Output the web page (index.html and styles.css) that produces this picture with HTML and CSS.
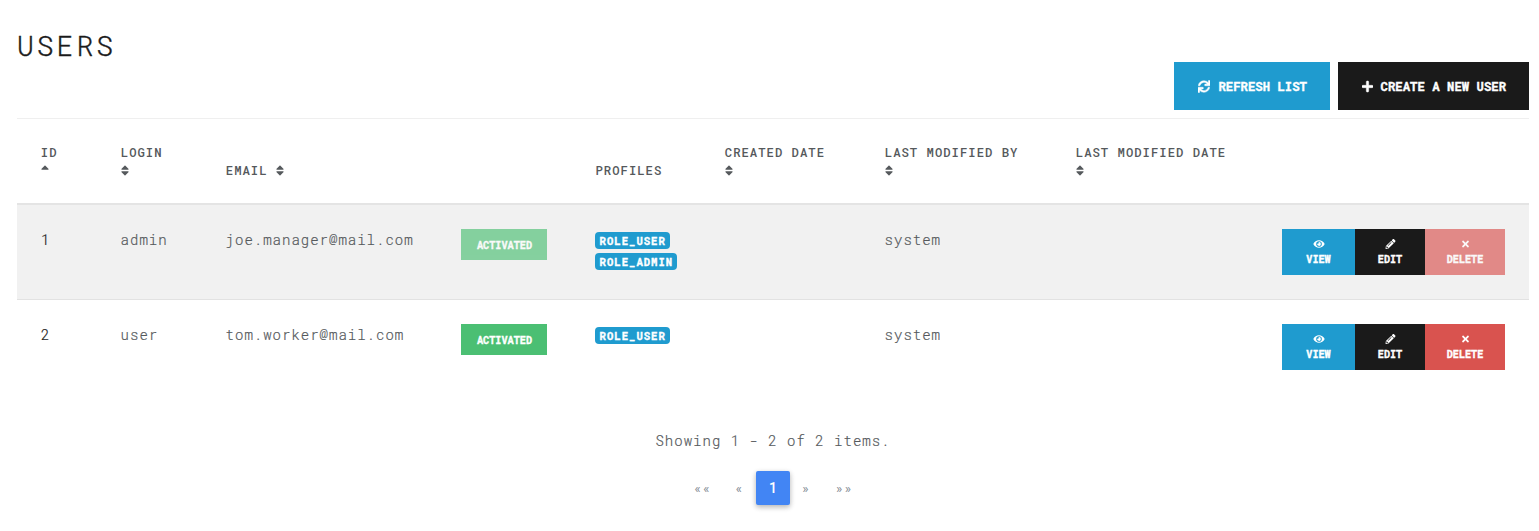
FILE: index.html
```html
<!DOCTYPE html>
<html lang="en">
<head>
<meta charset="utf-8">
<title>Users</title>
<link rel="stylesheet" href="styles.css">
</head>
<body>
<svg class="defs" width="0" height="0" aria-hidden="true">
<symbol id="sort" viewBox="0 0 320 512"><path d="M41 288h238c21.400 0 32.100 25.900 17 41L177 448c-9.400 9.400-24.600 9.400-33.900 0L24 329c-15.100-15.100-4.400-41 17-41zm255-105L177 64c-9.400-9.400-24.600-9.400-33.900 0L24 183c-15.100 15.100-4.400 41 17 41h238c21.400 0 32.100-25.900 17-41z"/></symbol>
<symbol id="sort-up" viewBox="0 0 320 512"><path d="M279 224H41c-21.400 0-32.100-25.900-17-41L143 64c9.400-9.400 24.600-9.400 33.900 0l119 119c15.200 15.100 4.500 41-16.900 41z"/></symbol>
<symbol id="sync" viewBox="0 0 512 512"><path d="M440.650 12.570l4 82.770A247.160 247.160 0 0 0 255.830 8C134.730 8 33.910 94.920 12.290 209.820A12 12 0 0 0 24.090 224h49.050a12 12 0 0 0 11.670-9.260 175.910 175.910 0 0 1 317-56.940l-101.460-4.860a12 12 0 0 0-12.570 12v47.410a12 12 0 0 0 12 12H500a12 12 0 0 0 12-12V12a12 12 0 0 0-12-12h-47.370a12 12 0 0 0-11.980 12.570zM255.830 432a175.610 175.610 0 0 1-146-77.800l101.800 4.870a12 12 0 0 0 12.570-12v-47.400a12 12 0 0 0-12-12H12a12 12 0 0 0-12 12V500a12 12 0 0 0 12 12h47.350a12 12 0 0 0 12-12.600l-4.150-82.570A247.170 247.170 0 0 0 255.830 504c121.110 0 221.930-86.920 243.550-201.820a12 12 0 0 0-11.800-14.180h-49.050a12 12 0 0 0-11.670 9.260A175.860 175.860 0 0 1 255.830 432z"/></symbol>
<symbol id="plus" viewBox="0 0 448 512"><path d="M416 208H272V64c0-17.670-14.330-32-32-32h-32c-17.670 0-32 14.330-32 32v144H32c-17.670 0-32 14.330-32 32v32c0 17.670 14.330 32 32 32h144v144c0 17.670 14.330 32 32 32h32c17.670 0 32-14.330 32-32V304h144c17.670 0 32-14.330 32-32v-32c0-17.670-14.330-32-32-32z"/></symbol>
<symbol id="eye" viewBox="0 0 576 512"><path d="M572.520 241.400C518.290 135.590 410.930 64 288 64S57.680 135.640 3.480 241.410a32.350 32.350 0 0 0 0 29.190C57.710 376.410 165.070 448 288 448s230.320-71.640 284.520-177.410a32.350 32.350 0 0 0 0-29.190zM288 400a144 144 0 1 1 144-144 143.930 143.930 0 0 1-144 144zm0-240a95.310 95.310 0 0 0-25.310 3.790 47.850 47.850 0 0 1-66.900 66.900A95.780 95.780 0 1 0 288 160z"/></symbol>
<symbol id="pencil" viewBox="0 0 512 512"><path d="M497.900 142.100l-46.100 46.100c-4.700 4.700-12.300 4.700-17 0l-111-111c-4.700-4.700-4.700-12.300 0-17l46.100-46.100c18.700-18.700 49.100-18.700 67.900 0l60.100 60.100c18.800 18.700 18.800 49.100 0 67.900zM284.200 99.800L21.600 362.400.400 483.900c-2.900 16.400 11.400 30.600 27.800 27.800l121.500-21.300 262.600-262.600c4.700-4.700 4.700-12.300 0-17l-111-111c-4.800-4.700-12.400-4.700-17.100 0zM124.100 339.900c-5.500-5.500-5.500-14.300 0-19.800l154-154c5.500-5.500 14.300-5.500 19.800 0s5.500 14.300 0 19.800l-154 154c-5.500 5.500-14.300 5.500-19.800 0zM88 424h48v36.300l-64.500 11.300-31.100-31.100L51.700 376H88v48z"/></symbol>
<symbol id="times" viewBox="0 0 352 512"><path d="M242.720 256l100.070-100.070c12.280-12.280 12.280-32.190 0-44.480l-22.240-22.240c-12.280-12.280-32.190-12.280-44.480 0L176 189.280 75.930 89.210c-12.280-12.280-32.190-12.280-44.480 0L9.210 111.450c-12.280 12.280-12.280 32.190 0 44.480L109.280 256 9.210 356.070c-12.280 12.280-12.280 32.190 0 44.480l22.240 22.240c12.280 12.280 32.200 12.280 44.480 0L176 322.720l100.070 100.070c12.280 12.280 32.200 12.280 44.480 0l22.240-22.240c12.280-12.280 12.280-32.190 0-44.480L242.720 256z"/></symbol>
</svg>
<main class="page">
  <header class="heading">
    <h2>USERS</h2>
    <div class="toolbar">
      <button class="btn info"><svg class="i-sync"><use href="#sync"/></svg><span>REFRESH LIST</span></button>
      <button class="btn dark"><svg class="i-plus"><use href="#plus"/></svg><span>CREATE A NEW USER</span></button>
    </div>
  </header>
  <table class="users">
    <colgroup><col class="c-id"><col class="c-login"><col class="c-email"><col class="c-state"><col class="c-prof"><col class="c-created"><col class="c-by"><col class="c-date"><col class="c-act"></colgroup>
    <thead><tr>
      <th>ID<br><svg class="sort"><use href="#sort-up"/></svg></th>
      <th>LOGIN<br><svg class="sort"><use href="#sort"/></svg></th>
      <th>EMAIL <svg class="sort"><use href="#sort"/></svg></th>
      <th></th>
      <th class="profiles">PROFILES</th>
      <th>CREATED DATE<br><svg class="sort"><use href="#sort"/></svg></th>
      <th>LAST MODIFIED BY<br><svg class="sort"><use href="#sort"/></svg></th>
      <th>LAST MODIFIED DATE<br><svg class="sort"><use href="#sort"/></svg></th>
      <th></th>
    </tr></thead>
    <tbody>
      <tr class="odd">
        <td class="id">1</td><td>admin</td><td>joe.manager@mail.com</td>
        <td><button class="state disabled">ACTIVATED</button></td>
        <td><div class="roles"><span class="badge">ROLE_USER</span><span class="badge">ROLE_ADMIN</span></div></td>
        <td></td><td>system</td><td></td>
        <td><div class="actions">
          <button class="act view"><svg class="i-eye"><use href="#eye"/></svg><span>VIEW</span></button>
          <button class="act edit"><svg class="i-sm"><use href="#pencil"/></svg><span>EDIT</span></button>
          <button class="act delete disabled"><svg class="i-sm"><use href="#times"/></svg><span>DELETE</span></button>
        </div></td>
      </tr>
      <tr>
        <td class="id">2</td><td>user</td><td>tom.worker@mail.com</td>
        <td><button class="state">ACTIVATED</button></td>
        <td><div class="roles"><span class="badge">ROLE_USER</span></div></td>
        <td></td><td>system</td><td></td>
        <td><div class="actions">
          <button class="act view"><svg class="i-eye"><use href="#eye"/></svg><span>VIEW</span></button>
          <button class="act edit"><svg class="i-sm"><use href="#pencil"/></svg><span>EDIT</span></button>
          <button class="act delete"><svg class="i-sm"><use href="#times"/></svg><span>DELETE</span></button>
        </div></td>
      </tr>
    </tbody>
  </table>
  <p class="summary">Showing 1 - 2 of 2 items.</p>
  <nav class="pager">
    <a class="wide">««</a><a>«</a><a class="current">1</a><a class="next">»</a><a class="wide">»»</a>
  </nav>
</main>
</body>
</html>
```

FILE: styles.css
```css
* { box-sizing: border-box; }
body {
  margin: 0;
  background: #fff;
  color: #55595c;
  font: 300 14px/21px "Roboto Mono", "Liberation Mono", monospace;
  letter-spacing: 1px;
}
.defs { position: absolute; }
svg { fill: currentColor; }
.page { width: 1512px; margin-left: 17px; }
.heading { height: 118px; padding-top: 29px; }
h2 {
  margin: 0;
  height: 33px;
  color: #1a1a1a;
  font-size: 28px;
  font-weight: 300;
  line-height: 34px;
  letter-spacing: 3px;
  -webkit-text-stroke: 0.4px #1a1a1a;
}
.toolbar { display: flex; justify-content: flex-end; gap: 8px; }
button {
  border: 0;
  padding: 0;
  color: #fff;
  font-family: inherit;
  font-weight: 700;
}
.btn {
  display: flex;
  align-items: center;
  height: 48px;
  padding: 0 24px;
  font-size: 12.25px;
  letter-spacing: 0.03px;
  white-space: nowrap;
  -webkit-text-stroke: 0.35px #fff;
}
.btn svg { stroke: #fff; stroke-width: 20px; overflow: visible; }
.info { width: 156px; background: #1f9bcf; }
.dark { width: 191px; background: #1a1a1a; }
.i-sync { width: 12px; height: 13px; margin-right: 8.4px; }
.i-plus { width: 11px; height: 13px; margin-right: 7.6px; }

.users {
  width: 1512px;
  table-layout: fixed;
  border-collapse: separate;
  border-spacing: 0;
}
.c-id { width: 80px; }
.c-login { width: 105px; }
.c-email { width: 235px; }
.c-state { width: 134px; }
.c-prof { width: 130px; }
.c-created { width: 160px; }
.c-by { width: 191px; }
.c-date { width: 206px; }
.c-act { width: 271px; }
th {
  height: 87px;
  padding: 0 0 24px 23.8px;
  border-top: 1px solid #efefef;
  border-bottom: 2px solid #e4e4e4;
  vertical-align: bottom;
  text-align: left;
  font-size: 12.25px;
  font-weight: 500;
  line-height: 18px;
  letter-spacing: 1px;
  white-space: nowrap;
}
th.profiles { padding-left: 24.5px; }
.sort { width: 8px; height: 13px; margin-left: -0.3px; vertical-align: -2px; }
td { height: 94px; padding: 24px 0 0 24px; vertical-align: top; white-space: nowrap; }
td:nth-child(2), td:nth-child(3), td:nth-child(7) { padding-left: 23.6px; }
td:not(:has(button, .badge)), .summary { -webkit-text-stroke: 0.2px currentColor; }
.odd td { height: 95px; background: #f1f1f1; border-bottom: 1px solid #e2e2e2; }
td.id { color: #1a1a1a; }
.state {
  display: block;
  width: 86px;
  height: 31px;
  padding-left: 1px;
  background: #4bbf73;
  font-size: 10.2px;
  letter-spacing: 0;
  -webkit-text-stroke: 0.35px #fff;
}
.state.disabled { opacity: 0.65; }
.roles { display: flex; flex-direction: column; align-items: flex-start; gap: 4px; padding-top: 3px; }
.badge {
  height: 17px;
  padding: 0 4px 0 4.6px;
  border-radius: 4px;
  background: #1f9bcf;
  color: #fff;
  font-size: 10.6px;
  font-weight: 700;
  line-height: 18px;
  letter-spacing: 1px;
  -webkit-text-stroke: 0.35px #fff;
}
.actions { display: flex; }
.act {
  display: flex;
  flex-direction: column;
  align-items: center;
  height: 46px;
  padding-top: 10px;
  font-size: 10.2px;
  line-height: 15px;
  letter-spacing: 0;
  -webkit-text-stroke: 0.35px #fff;
}
.act span { margin-top: 3px; }
.view { width: 73px; background: #1f9bcf; }
.edit { width: 70px; background: #1a1a1a; }
.delete { width: 80px; background: #d9534f; }
.delete.disabled { opacity: 0.65; }
.i-eye { width: 12px; height: 10px; }
.i-sm { width: 11px; height: 10px; }

.summary { margin: 36px 0 0; text-align: center; }
.pager { display: flex; justify-content: center; margin-top: 20px; padding-bottom: 26px; }
.pager a {
  width: 34px;
  height: 34px;
  padding-left: 1px;
  color: #868e96;
  font-size: 13px;
  font-weight: 400;
  line-height: 34px;
  text-align: center;
}
.pager a:last-child { padding-left: 0; }
.pager .next { padding: 0 2px 0 0; }
.pager .wide { width: 40px; }
.pager .current {
  padding-left: 0;
  border-radius: 2px;
  background: #4285f4;
  box-shadow: 0 2px 5px rgba(0, 0, 0, 0.2), 0 2px 6px rgba(0, 0, 0, 0.12);
  color: #fff;
  font: 500 14px/34px Roboto, sans-serif;
  letter-spacing: 0;
}
```
